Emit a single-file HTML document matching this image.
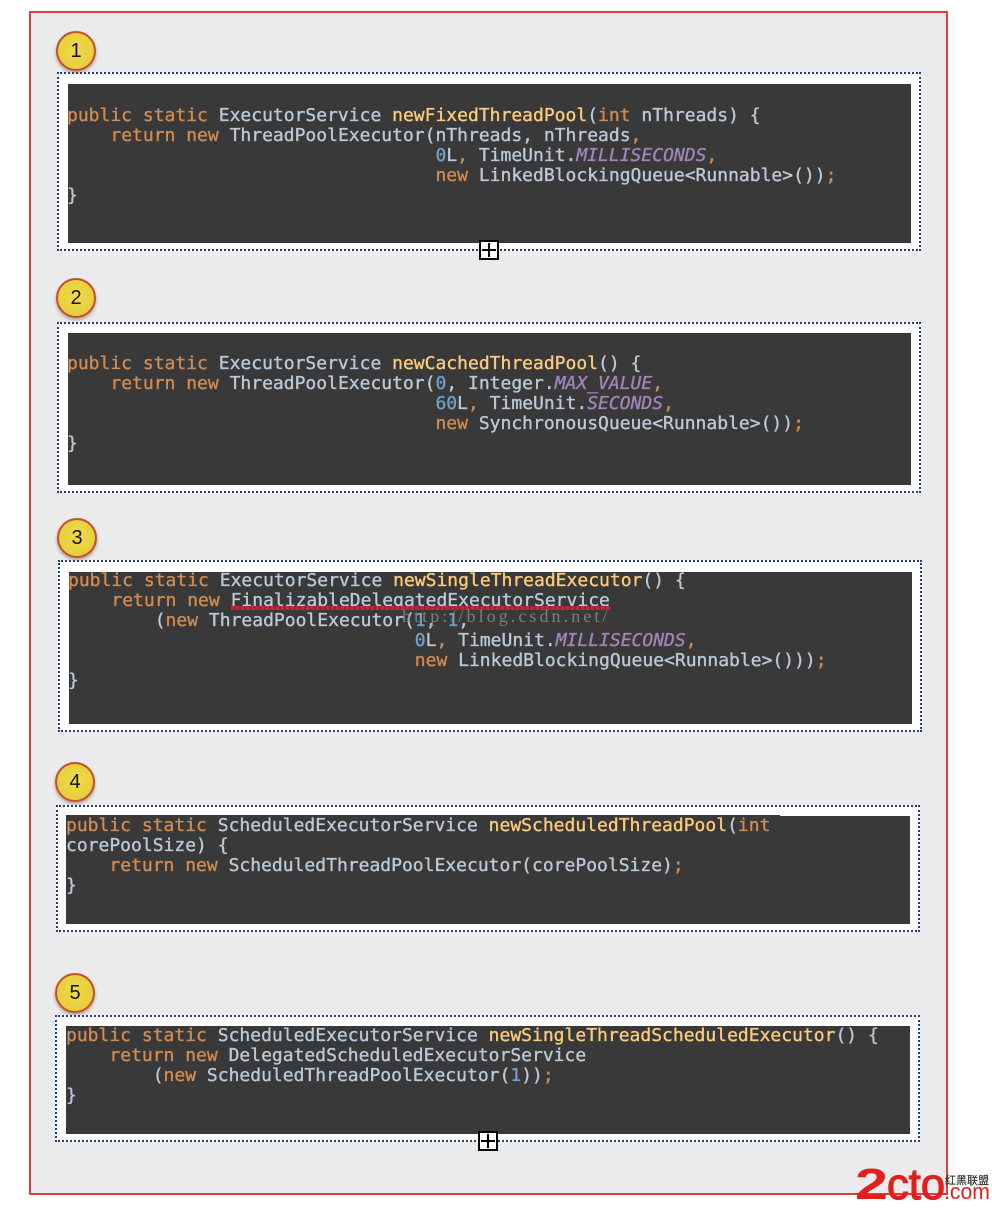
<!DOCTYPE html>
<html>
<head>
<meta charset="utf-8">
<style>
html,body{margin:0;padding:0;background:#fff;}
body{position:relative;width:992px;height:1210px;overflow:hidden;}
#frame{position:absolute;left:29px;top:11px;width:915px;height:1180px;border:2px solid #d8403a;background:#ebebec;}
.box{position:absolute;background:#fff;border:2px dotted #1f3f80;box-sizing:border-box;}
.dark{position:absolute;background:#393939;}
pre{position:absolute;margin:0;font:18px/20px "DejaVu Sans Mono","Liberation Mono",monospace;color:#bccad8;white-space:pre;-webkit-text-stroke:.35px currentColor;filter:blur(.3px);}
b{font-weight:normal;color:#d08c52;}
i{font-style:normal;color:#fdcb7c;}
u{text-decoration:none;color:#70a2c8;}
em{font-weight:normal;font-style:italic;color:#a285b8;}
.c{position:absolute;width:36px;height:36px;border-radius:50%;background:radial-gradient(circle at 50% 45%,#eedb45 0,#e8d040 65%,#e5b93e 100%);border:2px solid #c4502a;box-shadow:0 2px 3px rgba(90,60,40,.45);font:20px/36px "Liberation Sans",sans-serif;color:#111;text-align:center;}
.p{position:absolute;width:20px;height:20px;box-sizing:border-box;border:2px solid #000;background:#fff;}
.p:before{content:"";position:absolute;left:1px;right:1px;top:7px;height:2px;background:#000;}
.p:after{content:"";position:absolute;top:1px;bottom:1px;left:7px;width:2px;background:#000;}
#wm{position:absolute;left:402px;top:606px;font:18px/20px "Liberation Serif",serif;color:#8b8b8b;letter-spacing:3.07px;opacity:.85;white-space:nowrap;}
#sq{position:absolute;left:231px;top:606px;width:380px;height:4px;background:repeating-linear-gradient(90deg,#c9243c 0 3px,#8c2a3a 3px 5px);}
svg{position:absolute;left:840px;top:1155px;}
</style>
</head>
<body>
<div id="frame"></div>

<div class="box" style="left:57px;top:72px;width:864px;height:179px;"></div>
<div class="dark" style="left:68px;top:84px;width:843px;height:159px;"></div>
<pre style="left:67px;top:106px;"><b>public static</b> ExecutorService <i>newFixedThreadPool</i>(<b>int</b> nThreads) {
    <b>return new</b> ThreadPoolExecutor(nThreads, nThreads<b>,</b>
                                  <u>0</u>L<b>,</b> TimeUnit.<em>MILLISECONDS</em><b>,</b>
                                  <b>new</b> LinkedBlockingQueue&lt;Runnable&gt;())<b>;</b>
}</pre>
<div class="c" style="left:56px;top:31px;">1</div>
<div class="p" style="left:479px;top:240px;"></div>

<div class="box" style="left:57px;top:322px;width:864px;height:171px;"></div>
<div class="dark" style="left:68px;top:333px;width:843px;height:152px;"></div>
<pre style="left:67px;top:354px;"><b>public static</b> ExecutorService <i>newCachedThreadPool</i>() {
    <b>return new</b> ThreadPoolExecutor(<u>0</u>, Integer.<em>MAX_VALUE</em><b>,</b>
                                  <u>60</u>L<b>,</b> TimeUnit.<em>SECONDS</em><b>,</b>
                                  <b>new</b> SynchronousQueue&lt;Runnable&gt;())<b>;</b>
}</pre>
<div class="c" style="left:56px;top:278px;">2</div>

<div class="box" style="left:58px;top:560px;width:864px;height:172px;"></div>
<div class="dark" style="left:69px;top:572px;width:843px;height:152px;"></div>
<pre style="left:68px;top:571px;"><b>public static</b> ExecutorService <i>newSingleThreadExecutor</i>() {
    <b>return new</b> FinalizableDelegatedExecutorService
        (<b>new</b> ThreadPoolExecutor(<u>1</u>, <u>1</u>,
                                <u>0</u>L<b>,</b> TimeUnit.<em>MILLISECONDS</em><b>,</b>
                                <b>new</b> LinkedBlockingQueue&lt;Runnable&gt;()))<b>;</b>
}</pre>
<div id="sq"></div>
<div id="wm">http://blog.csdn.net/</div>
<div class="c" style="left:57px;top:518px;">3</div>

<div class="box" style="left:56px;top:805px;width:864px;height:127px;"></div>
<div class="dark" style="left:66px;top:816px;width:844px;height:108px;"></div>
<div class="dark" style="left:66px;top:815px;width:714px;height:2px;"></div>
<pre style="left:66px;top:816px;"><b>public static</b> ScheduledExecutorService <i>newScheduledThreadPool</i>(<b>int</b>
corePoolSize) {
    <b>return new</b> ScheduledThreadPoolExecutor(corePoolSize)<b>;</b>
}</pre>
<div class="c" style="left:55px;top:762px;">4</div>

<div class="box" style="left:55px;top:1015px;width:865px;height:127px;"></div>
<div class="dark" style="left:66px;top:1026px;width:844px;height:108px;"></div>
<pre style="left:66px;top:1026px;"><b>public static</b> ScheduledExecutorService <i>newSingleThreadScheduledExecutor</i>() {
    <b>return new</b> DelegatedScheduledExecutorService
        (<b>new</b> ScheduledThreadPoolExecutor(<u>1</u>))<b>;</b>
}</pre>
<div class="c" style="left:55px;top:973px;">5</div>
<div class="p" style="left:478px;top:1131px;"></div>

<svg width="152" height="55" viewBox="0 0 152 55">
<text x="15" y="44" font-family="'Liberation Sans',sans-serif" font-weight="bold" font-size="44" fill="#e0201c" textLength="33" lengthAdjust="spacingAndGlyphs">2</text>
<text x="47" y="44" font-family="'Liberation Sans',sans-serif" font-size="44" fill="#e0201c" stroke="#e0201c" stroke-width="1.2" textLength="58" lengthAdjust="spacingAndGlyphs">cto</text>
<text x="104" y="44" font-family="'Liberation Sans',sans-serif" font-size="22" fill="#e0201c" textLength="46" lengthAdjust="spacingAndGlyphs">.com</text>
<text x="105" y="29" font-family="'Noto Sans CJK SC',sans-serif" font-size="11" fill="#333" stroke="#333" stroke-width=".2" textLength="44">红黑联盟</text>
</svg>
</body>
</html>
